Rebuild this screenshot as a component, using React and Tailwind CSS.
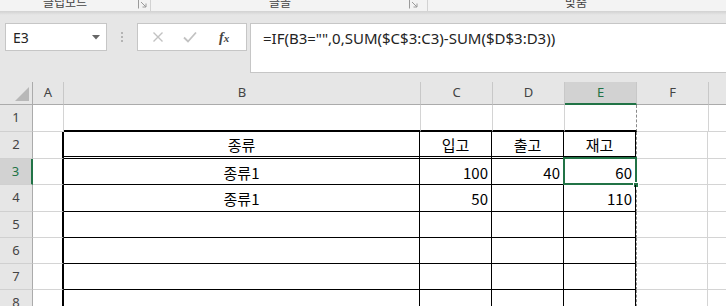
import React from 'react'

const ui = { fontFamily: '"Segoe UI", "Noto Sans", "Noto Sans CJK KR", sans-serif' }
const cellFont = { fontFamily: '"Noto Sans CJK KR", "Noto Sans", sans-serif' }

const ROW_H = [27, 27, 26, 27, 26, 26, 26, 26]

// 표 데이터 (B..E)
const DATA = {
  2: ['종류', '입고', '출고', '재고'],
  3: ['종류1', '100', '40', '60'],
  4: ['종류1', '50', '', '110'],
}

function Launcher() {
  return (
    <svg width="10" height="10" viewBox="0 0 10 10" className="shrink-0">
      <path d="M0.5 9.5V0.5H9.5" fill="none" stroke="#9a9a9a" strokeWidth="1" />
      <path d="M3 3L8 8M8 4.5V8H4.5" fill="none" stroke="#9a9a9a" strokeWidth="1" />
    </svg>
  )
}

function Ribbon() {
  return (
    <div className="h-[12px] bg-[#f3f3f3] border-b border-[#d4d4d4] flex overflow-hidden text-[12px] leading-[12px] text-[#444]" style={ui}>
      <div className="w-[151px] flex items-start border-r border-[#d2d2d2]">
        <span className="w-[130px] text-center -mt-[3px]">클립보드</span>
        <span className="ml-[8px] -mt-[1px]"><Launcher /></span>
      </div>
      <div className="w-[277px] flex items-start border-r border-[#d2d2d2]">
        <span className="w-[258px] text-center -mt-[3px]">글꼴</span>
        <span className="-mt-[1px]"><Launcher /></span>
      </div>
      <div className="flex-1 flex items-start">
        <span className="w-[296px] text-center -mt-[3px]">맞춤</span>
      </div>
    </div>
  )
}

function FormulaBar() {
  return (
    <div className="bg-[#e6e6e6]" style={ui}>
      <div className="h-[3px] bg-gradient-to-b from-[#d6d6d6] to-[#e6e6e6]" />
      <div className="flex items-start pt-[8px] h-[67px]">
        <div className="ml-[5px] w-[102px] h-[28px] bg-white border border-[#c6c6c6] flex items-center pl-[7px] pr-[6px] text-[14px] text-[#222]">
          <span className="flex-1">E3</span>
          <svg width="8" height="5" viewBox="0 0 8 5"><path d="M0 0H8L4 4.5Z" fill="#666" /></svg>
        </div>
        <div className="w-[30px] h-[28px] flex items-center justify-center">
          <div className="flex flex-col gap-[2px]">
            <span className="w-[2px] h-[2px] bg-[#b4b4b4]" />
            <span className="w-[2px] h-[2px] bg-[#b4b4b4]" />
            <span className="w-[2px] h-[2px] bg-[#b4b4b4]" />
          </div>
        </div>
        <div className="w-[110px] h-[28px] bg-white border border-[#c6c6c6] flex items-center">
          <svg width="12" height="12" viewBox="0 0 12 12" className="ml-[14px]">
            <path d="M1.5 1.5L10.5 10.5M10.5 1.5L1.5 10.5" stroke="#c2c2c2" strokeWidth="1.4" />
          </svg>
          <svg width="14" height="12" viewBox="0 0 14 12" className="ml-[19px]">
            <path d="M1 6.5L5 10.5L13 1.5" fill="none" stroke="#c2c2c2" strokeWidth="1.8" />
          </svg>
          <span className="ml-[22px] text-[14px] italic text-[#444] font-bold" style={{ fontFamily: '"Liberation Serif", serif' }}>
            f<span className="text-[11px]">x</span>
          </span>
        </div>
        <div className="ml-[3px] flex-1 h-[50px] bg-white border border-r-0 border-[#c6c6c6] pl-[12px] pt-[3px] text-[15px] text-[#222]">
          =IF(B3="",0,SUM($C$3:C3)-SUM($D$3:D3))
        </div>
      </div>
    </div>
  )
}

const COLS = [
  { key: 'A', w: 31 },
  { key: 'B', w: 357 },
  { key: 'C', w: 72 },
  { key: 'D', w: 72 },
  { key: 'E', w: 72 },
  { key: 'F', w: 72 },
]

function HeaderRow() {
  return (
    <div className="flex h-[23px] bg-[#e6e6e6] text-[13px] text-[#444]" style={ui}>
      <div className="w-[33px] h-full border-r border-b border-[#ababab] flex items-end justify-end pr-[3px] pb-[3px]">
        <svg width="14" height="14" viewBox="0 0 14 14"><path d="M14 0V14H0Z" fill="#b8b8b8" /></svg>
      </div>
      {COLS.map(c => (
        <div
          key={c.key}
          className={`h-full flex items-center justify-center border-r border-[#c8c8c8] ${c.key === 'E' ? 'bg-[#d2d2d2] border-b-2 border-b-[#217346] text-[#217346]' : 'border-b border-b-[#ababab]'}`}
          style={{ width: c.w }}
        >
          {c.key}
        </div>
      ))}
      <div className="flex-1 h-full border-b border-[#ababab]" />
    </div>
  )
}

function Row({ n, h }) {
  const inTable = n >= 2
  const selected = n === 3
  const vals = DATA[n] || []
  return (
    <div className="flex" style={{ height: h }}>
      <div
        className={`w-[33px] h-full flex items-center justify-center text-[13px] border-b border-b-[#d0d0d0] ${selected ? 'bg-[#d2d2d2] text-[#217346] border-r-2 border-r-[#217346]' : 'bg-[#e6e6e6] text-[#444] border-r border-r-[#ababab]'}`}
        style={ui}
      >
        {n}
      </div>
      {/* A */}
      <div className={`w-[31px] h-full border-b border-[#d4d4d4] ${inTable ? 'border-r-2 border-r-black' : 'border-r border-r-[#d4d4d4]'}`} />
      {/* B..E */}
      {['B', 'C', 'D', 'E'].map((k, i) => {
        const w = i === 0 ? (inTable ? 356 : 357) : 72
        let bottom = 'border-b border-b-[#d4d4d4]'
        if (n === 1) bottom = 'border-b-2 border-b-black'
        else if (n === 2) bottom = 'border-b-[3px] [border-bottom-style:double] border-b-black'
        else if (inTable) bottom = 'border-b border-b-black'
        let right = 'border-r border-r-[#d4d4d4]'
        if (inTable) right = 'border-r border-r-black'
        else if (k === 'E') right = 'border-r [border-right-style:dashed] border-r-[#8a8a8a]'
        const v = vals[i]
        const header = n === 2
        const align = header || i === 0 ? 'justify-center' : 'justify-end pr-[3px]'
        return (
          <div key={k} className={`relative h-full flex items-center ${align} ${bottom} ${right} text-[15px] text-black`} style={{ width: w, ...cellFont }}>
            <span className="leading-none pt-[1px]">{v}</span>
            {selected && k === 'E' && (
              <>
                <div className="absolute -left-[1px] -top-[2px] -right-[2px] -bottom-[1px] border-2 border-[#217346]" />
                <div className="absolute -right-[4px] -bottom-[4px] w-[6px] h-[6px] bg-[#217346] border border-white" />
              </>
            )}
          </div>
        )
      })}
      {/* F */}
      <div className={`w-[72px] h-full border-b border-r border-[#d4d4d4] ${inTable ? 'border-l [border-left-style:dashed] border-l-[#8a8a8a]' : ''}`} />
      <div className="flex-1 h-full border-b border-[#d4d4d4]" />
    </div>
  )
}

export default function App() {
  return (
    <div className="w-[726px] h-[306px] overflow-hidden bg-white">
      <Ribbon />
      <FormulaBar />
      <HeaderRow />
      {ROW_H.map((h, i) => (
        <Row key={i} n={i + 1} h={h} />
      ))}
    </div>
  )
}
